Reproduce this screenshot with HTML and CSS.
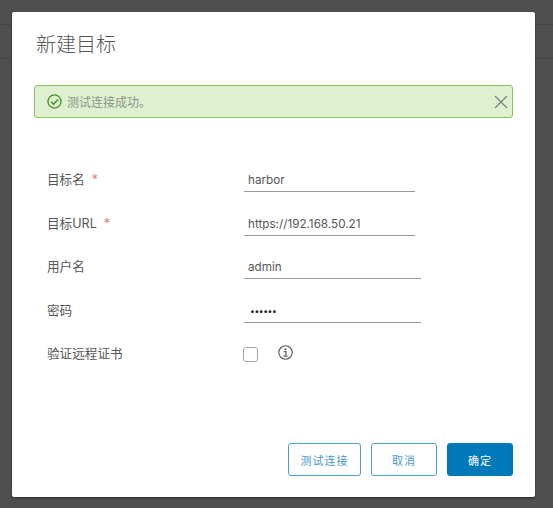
FILE: index.html
```html
<!DOCTYPE html>
<html lang="zh-CN">
<head>
    <meta charset="UTF-8">
    <meta name="viewport" content="width=device-width, initial-scale=1.0">
    <title>新建目标</title>
    <link rel="stylesheet" href="styles.css">
</head>
<body>
    <div class="modal">
        <h3 class="modal-title">新建目标</h3>

        <div class="alert">
            <svg class="alert-icon" viewBox="0 0 16 16" width="15" height="15" aria-hidden="true">
                <circle cx="8" cy="8" r="7" fill="none" stroke="#3f8f1f" stroke-width="1.4"/>
                <path d="M4.4 8.2l2.6 2.6 4.6-5" fill="none" stroke="#3f8f1f" stroke-width="1.5"/>
            </svg>
            <span class="alert-text">测试连接成功。</span>
            <svg class="alert-close" viewBox="0 0 14 14" width="14" height="14" aria-hidden="true">
                <path d="M1 1l12 12M13 1L1 13" fill="none" stroke="#808080" stroke-width="1.3"/>
            </svg>
        </div>

        <form class="form">
            <label class="label required">目标名</label>
            <div class="field short">harbor</div>

            <label class="label required">目标URL</label>
            <div class="field short">https://192.168.50.21</div>

            <label class="label">用户名</label>
            <div class="field">admin</div>

            <label class="label">密码</label>
            <div class="field password">••••••</div>

            <label class="label">验证远程证书</label>
            <div class="check-row">
                <span class="checkbox"></span>
                <svg class="info-icon" viewBox="0 0 15 15" width="15" height="15" aria-hidden="true">
                    <circle cx="7.5" cy="7.5" r="6.7" fill="none" stroke="#565656" stroke-width="1.1"/>
                    <circle cx="7.5" cy="4.2" r="1" fill="#565656"/>
                    <path d="M5.8 6.6h2.1v4.4M5.5 11.1h4" fill="none" stroke="#565656" stroke-width="1.1"/>
                </svg>
            </div>
        </form>

        <div class="footer">
            <button class="btn btn-test" type="button">测试连接</button>
            <button class="btn btn-cancel" type="button">取消</button>
            <button class="btn btn-primary" type="button">确定</button>
        </div>
    </div>
</body>
</html>
```

FILE: styles.css
```css
html, body {
    height: 100%;
}

body {
    margin: 0;
    padding: 12px 18px 11px 12px;
    box-sizing: border-box;
    font-family: Inter, "Noto Sans CJK SC", sans-serif;
    background-color: #4f4f4f;
    background-image:
        linear-gradient(#464646, #464646),
        linear-gradient(#464646, #464646);
    background-repeat: no-repeat;
    background-size: 100% 1px;
    background-position: 0 24px, 0 58px;
}

.modal {
    display: flex;
    flex-direction: column;
    width: 523px;
    height: 485px;
    box-sizing: border-box;
    padding: 20px 22px 21px;
    background-color: #fff;
    border-radius: 2px;
    box-shadow: 0 1px 2px rgba(0, 0, 0, 0.5);
}

.modal-title {
    margin: 0 0 0 2px;
    font-size: 20px;
    font-weight: 300;
    line-height: 26px;
    color: #565656;
}

.alert {
    display: flex;
    align-items: center;
    height: 33px;
    margin-top: 27px;
    padding: 0 4px 0 12px;
    box-sizing: border-box;
    background-color: #dff0d0;
    border: 1px solid #85c75c;
    border-radius: 3px;
}

.alert-icon {
    flex: none;
}

.alert-text {
    flex: 1;
    margin-left: 5px;
    font-size: 12px;
    color: #8a9486;
}

.alert-close {
    flex: none;
}

.form {
    display: grid;
    grid-template-columns: 197px 1fr;
    grid-auto-rows: 43.6px;
    margin: 39px 0 0 13px;
}

.label {
    font-size: 12.6px;
    line-height: 46px;
    height: 43.6px;
    color: #565656;
}

.required::after {
    content: "*";
    margin-left: 7px;
    color: #e87a6c;
}

.field {
    width: 177px;
    height: 25px;
    margin-top: 10px;
    padding-left: 4px;
    box-sizing: border-box;
    font-size: 11.7px;
    line-height: 26px;
    color: #565656;
    border-bottom: 1px solid #9a9a9a;
}

.short {
    width: 171px;
}

.password {
    padding-left: 6px;
    color: #222;
    font-size: 8.5px;
    letter-spacing: -0.4px;
}

.check-row {
    display: flex;
    align-items: flex-start;
    height: 43.6px;
}

.checkbox {
    width: 15px;
    height: 15px;
    margin: 16px 0 0 -1px;
    box-sizing: border-box;
    border: 1px solid #a6a6a6;
    border-radius: 3px;
}

.info-icon {
    margin: 14px 0 0 20px;
}

.footer {
    display: flex;
    justify-content: flex-end;
    gap: 10px;
    margin-top: auto;
}

.btn {
    height: 33px;
    padding: 0;
    box-sizing: border-box;
    font-family: inherit;
    font-size: 11px;
    letter-spacing: 1px;
    border-radius: 3px;
    border: 1px solid #4d9fcf;
    color: #4a9ccc;
    background-color: #fff;
}

.btn-test {
    width: 73px;
}

.btn-cancel {
    width: 66px;
}

.btn-primary {
    width: 66px;
    color: #fff;
    border-color: #0079b8;
    background-color: #0079b8;
}
```
